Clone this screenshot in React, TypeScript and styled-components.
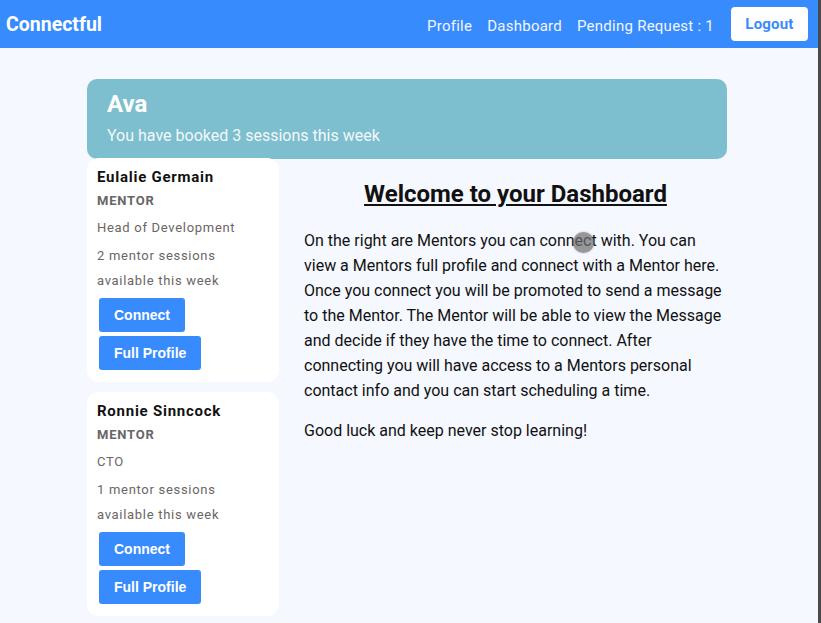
import React from "react";
import styled, { createGlobalStyle } from "styled-components";

const Global = createGlobalStyle`
  html, body { margin: 0; padding: 0; }
  body {
    background: #f5f8ff;
    font-family: Roboto, "Noto Sans", Arial, sans-serif;
  }
`;

const Page = styled.div`
  width: 818px;
  min-height: 623px;
  border-right: 3px solid #4a4a4a;
  background: #f5f8ff;
  position: relative;
`;

const NavBar = styled.header`
  height: 48px;
  background: #388bfd;
  display: flex;
  align-items: center;
  justify-content: space-between;
  padding: 0 10px 0 6px;
`;

const Brand = styled.div`
  color: #fff;
  font-weight: 700;
  font-size: 19.5px;
`;

const NavLinks = styled.nav`
  display: flex;
  align-items: center;
  gap: 15px;
`;

const NavLink = styled.span`
  color: #f2f6ff;
  font-size: 15px;
  letter-spacing: 0.25px;
  padding-top: 3px;
`;

const LogoutButton = styled.button`
  margin-left: 2px;
  background: #fff;
  color: #388bfd;
  border: none;
  border-radius: 4px;
  height: 34px;
  width: 77px;
  font-family: Roboto, sans-serif;
  font-weight: 700;
  font-size: 15px;
  letter-spacing: 0.2px;
`;

const Container = styled.main`
  width: 640px;
  margin: 31px 0 0 87px;
`;

const Banner = styled.section`
  background: #7dbecf;
  border-radius: 10px;
  padding: 11px 20px 14px;
  color: #fff;
`;

const BannerName = styled.h2`
  margin: 0;
  font-size: 24px;
  font-weight: 700;
  line-height: 28px;
`;

const BannerText = styled.p`
  margin: 8px 0 0;
  font-size: 16px;
  color: #f4f8fa;
  line-height: 19px;
`;

const Columns = styled.div`
  display: flex;
  align-items: flex-start;
`;

const MentorList = styled.div`
  width: 192px;
  display: flex;
  flex-direction: column;
  gap: 10px;
  margin-top: -1px;
`;

const Card = styled.article`
  background: #fff;
  border-radius: 12px;
  padding: 9px 10px 12px;
`;

const MentorName = styled.div`
  font-size: 15px;
  font-weight: 700;
  color: #111;
  letter-spacing: 0.75px;
  line-height: 20px;
`;

const Role = styled.div`
  margin-top: 5px;
  font-size: 13px;
  font-weight: 700;
  color: #666;
  letter-spacing: 0.8px;
  line-height: 18px;
`;

const Info = styled.div<{ $gap?: number }>`
  font-size: 13px;
  color: #6b6565;
  letter-spacing: 0.7px;
  line-height: 25px;
  margin-top: ${(p) => p.$gap ?? 0}px;
`;

const Buttons = styled.div`
  display: flex;
  flex-direction: column;
  align-items: flex-start;
  gap: 4px;
  margin: 5px 0 0 2px;
`;

const ActionButton = styled.button`
  background: #388bfd;
  color: #fff;
  border: none;
  border-radius: 3px;
  height: 34px;
  padding: 0 15px;
  font-family: "Liberation Sans", Arial, sans-serif;
  font-weight: 700;
  font-size: 14px;
`;

const Intro = styled.section`
  flex: 1;
  padding-left: 25px;
  color: #111;
`;

const Heading = styled.h1`
  margin: 20px 0 0;
  text-align: center;
  font-size: 24px;
  font-weight: 700;
  text-decoration: underline;
  line-height: 30px;
`;

const Paragraph = styled.p<{ $top: number }>`
  margin: ${(p) => p.$top}px 0 0;
  font-size: 16px;
  line-height: 25px;
`;

const Touch = styled.div`
  position: absolute;
  left: 573px;
  top: 232px;
  width: 21px;
  height: 21px;
  border-radius: 50%;
  background: rgba(110, 110, 110, 0.7);
  box-shadow: 0 0 2px rgba(110, 110, 110, 0.5);
  pointer-events: none;
`;

const mentors = [
  { name: "Eulalie Germain", title: "Head of Development", sessions: 2 },
  { name: "Ronnie Sinncock", title: "CTO", sessions: 1 },
];

export default function App() {
  return (
    <Page>
      <Global />
      <NavBar>
        <Brand>Connectful</Brand>
        <NavLinks>
          <NavLink>Profile</NavLink>
          <NavLink>Dashboard</NavLink>
          <NavLink>Pending Request : 1</NavLink>
          <LogoutButton>Logout</LogoutButton>
        </NavLinks>
      </NavBar>
      <Container>
        <Banner>
          <BannerName>Ava</BannerName>
          <BannerText>You have booked 3 sessions this week</BannerText>
        </Banner>
        <Columns>
          <MentorList>
            {mentors.map((m) => (
              <Card key={m.name}>
                <MentorName>{m.name}</MentorName>
                <Role>MENTOR</Role>
                <Info $gap={5}>{m.title}</Info>
                <Info $gap={3}>{m.sessions} mentor sessions</Info>
                <Info>available this week</Info>
                <Buttons>
                  <ActionButton>Connect</ActionButton>
                  <ActionButton>Full Profile</ActionButton>
                </Buttons>
              </Card>
            ))}
          </MentorList>
          <Intro>
            <Heading>Welcome to your Dashboard</Heading>
            <Paragraph $top={19}>
              On the right are Mentors you can connect with. You can view a Mentors full
              profile and connect with a Mentor here. Once you connect you will be promoted
              to send a message to the Mentor. The Mentor will be able to view the Message
              and decide if they have the time to connect. After connecting you will have
              access to a Mentors personal contact info and you can start scheduling a time.
            </Paragraph>
            <Paragraph $top={15}>Good luck and keep never stop learning!</Paragraph>
          </Intro>
        </Columns>
      </Container>
      <Touch />
    </Page>
  );
}
